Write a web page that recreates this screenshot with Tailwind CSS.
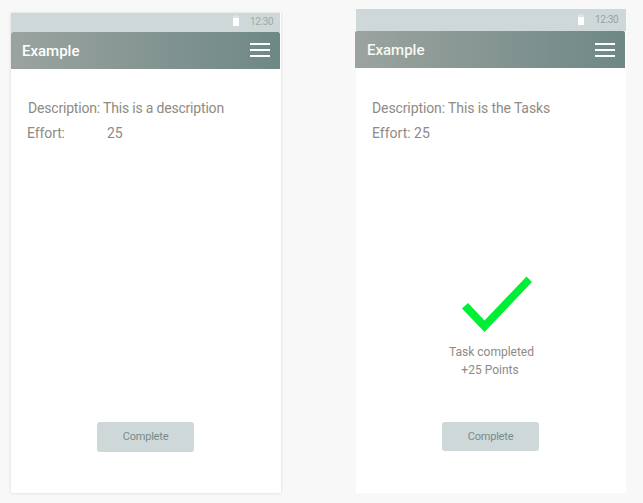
<!DOCTYPE html>
<html lang="en">
<head>
<meta charset="utf-8">
<title>Example</title>
<script src="https://cdn.jsdelivr.net/npm/@tailwindcss/browser@4"></script>
</head>
<body class="w-[643px] h-[503px] overflow-hidden bg-[#f8f8f8] font-['Roboto',sans-serif] text-[#8d8b84]">
<main class="flex items-start pl-[11px] gap-[75px]">
  <section class="mt-[13px] w-[270px] h-[480px] bg-white shadow-[0_0_3px_rgba(0,0,0,0.14)] flex flex-col">
    <div class="h-[19px] w-[269px] shrink-0 bg-[#cfd8d9] flex justify-end items-start pr-[7px]">
      <svg class="w-[6px] h-[11px] mt-[2px] mr-[11px]" viewBox="0 0 6 11"><path d="M2 0h2v1h2v2H0V1h2z" fill="#dde4e3"/><path d="M0 3h6v8H0z" fill="#fff"/></svg>
      <span class="w-[23px] text-[10px] leading-[16px] pt-px tracking-[-0.3px] whitespace-nowrap text-[#a0aaa6]">12:30</span>
    </div>
    <header class="h-[37px] w-[269px] shrink-0 rounded-t-[2px] bg-linear-to-r from-[#9ba39f] to-[#6e8886] flex justify-between items-center pl-[11px] pr-[10px] text-white">
      <h1 class="text-[15px] leading-[20px] font-medium pt-[1px]">Example</h1>
      <svg class="w-[20px] h-[14px] mt-[-2px]" viewBox="0 0 20 14" fill="#fff"><path d="M0 0h20v2H0zM0 6h20v2H0zM0 12h20v2H0z"/></svg>
    </header>
    <p class="mt-[29px] pl-[17px] text-[14px] leading-[20px] tracking-[-0.19px] whitespace-nowrap">Description: This is a description</p>
    <p class="mt-[5px] pl-[16px] text-[14px] leading-[20px] flex"><span class="w-[80px] tracking-[-0.1px]">Effort:</span><span>25</span></p>
    <button class="mt-[279px] ml-[86px] w-[97px] h-[30px] rounded-[3px] bg-[#cfd8d8] text-[11px] leading-[28px] pt-px pb-px tracking-[-0.2px] text-[#748d88]">Complete</button>
  </section>
  <section class="mt-[9px] w-[270px] h-[484px] bg-white flex flex-col">
    <div class="h-[22px] shrink-0 bg-[#cfd8d9] flex justify-end items-start pr-[8px]">
      <svg class="w-[6px] h-[11px] mt-[5px] mr-[11px]" viewBox="0 0 6 11"><path d="M2 0h2v1h2v2H0V1h2z" fill="#dde4e3"/><path d="M0 3h6v8H0z" fill="#fff"/></svg>
      <span class="w-[23px] text-[10px] leading-[22px] tracking-[-0.3px] whitespace-nowrap text-[#98a29e]">12:30</span>
    </div>
    <header class="h-[37px] w-[270px] -ml-px shrink-0 rounded-t-[2px] bg-linear-to-r from-[#9ba39f] to-[#6e8886] flex justify-between items-center pl-[12px] pr-[10px] text-[#f8f8f4]">
      <h1 class="text-[15px] leading-[20px] font-medium pt-[1px]">Example</h1>
      <svg class="w-[20px] h-[14px] mt-px" viewBox="0 0 20 14" fill="#fff"><path d="M0 0h20v2H0zM0 6h20v2H0zM0 12h20v2H0z"/></svg>
    </header>
    <p class="mt-[30px] pl-[16px] text-[14px] leading-[20px] tracking-[-0.11px] whitespace-nowrap">Description: This is the Tasks</p>
    <p class="mt-[5px] pl-[16px] text-[14px] leading-[20px]">Effort: 25</p>
    <svg class="w-[72px] h-[58px] mt-[132px] ml-[105px] shrink-0" viewBox="0 0 72 58"><path d="M1 33.5 7 28 23.5 45.5 65.5 1.5 71 7 23.5 57z" fill="#00ee36"/></svg>
    <div class="mt-[10px] ml-[84px] w-[103px] text-center text-[12px] leading-[18px]"><p>Task completed</p><p class="pr-[3px]">+25 Points</p></div>
    <button class="mt-[43px] ml-[86px] w-[97px] h-[29px] rounded-[3px] bg-[#cfd8d8] text-[11px] leading-[28px] pt-px tracking-[-0.2px] text-[#748d88]">Complete</button>
  </section>
</main>
</body>
</html>
